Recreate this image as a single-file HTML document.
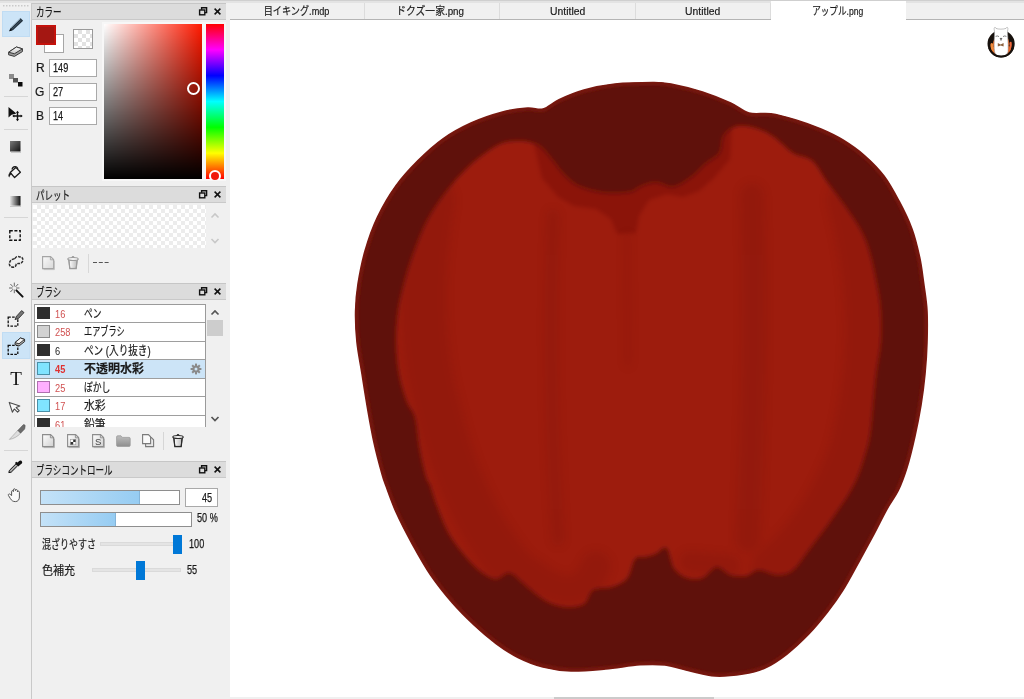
<!DOCTYPE html>
<html lang="ja">
<head>
<meta charset="utf-8">
<title>アップル.png</title>
<style>
*{box-sizing:border-box;margin:0;padding:0}
html,body{width:1024px;height:699px;overflow:hidden;background:#f0f0f0}
body{position:relative;opacity:.999;font-family:"Liberation Sans","Noto Sans CJK JP",sans-serif;font-size:12px;color:#1a1a1a}
.abs{position:absolute}
#topstrip{left:0;top:0;width:1024px;height:3px;background:#e3e3e3;border-top:1px solid #cfcfcf}
/* toolbar */
#toolbar{left:0;top:3px;width:32px;height:696px;background:#f0f0f0;border-right:1px solid #c9c9c9}
.tsel{background:#cce4f7;border:1px solid #b8d8f0}
.tsep{left:4px;width:23px;height:1px;background:#d4d4d4}
/* panels */
.ptitle{left:32px;width:194px;height:17px;background:#dcdcdc;border-top:1px solid #c6c6c6;border-bottom:1px solid #c9c9c9}
.ptitle span{-webkit-text-stroke:.2px #1a1a1a;position:absolute;left:4px;top:.7px;font-size:12px;line-height:17px;white-space:nowrap;transform-origin:0 50%;transform:scaleX(.71)}
.ptitle svg{position:absolute;top:0;left:165px}
.inp{background:#fff;border:1px solid #a9a9a9}
.lbl{-webkit-text-stroke:.2px #1a1a1a;font-size:12px;line-height:14px;white-space:nowrap}
.num{-webkit-text-stroke:.25px #1a1a1a;font-size:12px;line-height:14px;white-space:nowrap;transform-origin:0 50%;transform:scaleX(.76)}
/* brush list */
#blist{left:34px;top:303.5px;width:172px;height:123px;background:#fff;border-left:1px solid #9a9a9a;border-right:1px solid #9a9a9a;border-top:1px solid #9a9a9a;overflow:hidden}
.brow{position:absolute;left:0;width:170px;height:18.5px;border-bottom:1px solid #9e9e9e}
.brow i{position:absolute;left:2px;top:2px;width:12.5px;height:12.5px;border:1px solid #777}
.brow b{position:absolute;left:20px;top:2px;font-weight:normal;font-size:11px;line-height:14px;color:#d05050;transform-origin:0 50%;transform:scaleX(.84)}
.brow span{-webkit-text-stroke:.2px #1a1a1a;position:absolute;left:49px;top:1px;font-size:12px;line-height:16px;white-space:nowrap;transform-origin:0 50%}
.brow.sel{background:#cce4f7}
.brow.sel b{font-weight:bold;color:#e03030}
.brow.sel span{font-weight:bold}
/* tabs */
#tabbar{left:230px;top:3px;width:794px;height:17px;background:#f0f0f0;border-bottom:1px solid #b4b4b4}
.tab{-webkit-text-stroke:.2px #1a1a1a;position:absolute;top:0;height:16px;border-right:1px solid #dcdcdc;text-align:center;font-size:11px;line-height:16px;white-space:nowrap}
.tab span{display:inline-block}
.tab.act{top:-2px;height:19px;background:#fff;border-right:none;line-height:20px}
#canvas{left:230px;top:20px;width:794px;height:677px;background:#fff;overflow:hidden}
</style>
</head>
<body>
<div id="topstrip" class="abs"></div>
<div id="canvas" class="abs">
<svg class="abs" style="left:-230px;top:-20px" width="1024" height="699" viewBox="0 0 1024 699">
<defs>
<filter id="bl" x="-5%" y="-5%" width="110%" height="110%"><feGaussianBlur stdDeviation="2.2"/></filter>
<filter id="bl1" x="-5%" y="-5%" width="110%" height="110%"><feGaussianBlur stdDeviation="1.3"/></filter>
<filter id="bl2" x="-10%" y="-10%" width="120%" height="120%"><feGaussianBlur stdDeviation="5"/></filter>
<clipPath id="ic"><path d="M640.0 187.0C644.2 185.4 649.9 182.5 655.6 182.5C661.3 182.5 667.8 188.1 674.0 187.0C680.2 185.9 687.7 179.8 693.0 176.0C698.3 172.2 701.1 167.8 705.6 164.0C710.1 160.2 716.6 157.7 719.7 153.0C722.8 148.3 721.1 140.1 724.0 135.6C726.9 131.1 731.7 127.3 737.0 126.0C742.3 124.7 749.4 126.2 755.6 128.0C761.8 129.8 767.8 132.8 774.0 137.0C780.2 141.2 786.7 149.1 793.0 153.0C799.3 156.9 806.2 155.7 812.0 160.6C817.8 165.5 821.8 174.7 827.5 182.5C833.2 190.3 840.2 199.2 846.0 207.5C851.8 215.8 857.8 224.2 862.0 232.5C866.2 240.8 868.4 248.2 871.0 257.5C873.6 266.8 875.9 279.1 877.5 288.0C879.1 296.9 880.1 301.9 880.6 311.0C881.1 320.1 881.4 332.0 880.6 342.5C879.8 353.0 877.3 363.6 876.0 374.0C874.7 384.4 874.0 394.7 873.0 405.0C872.0 415.3 871.2 427.2 869.7 436.0C868.2 444.8 866.1 451.0 864.0 458.0C861.9 465.0 859.7 471.8 857.0 478.0C854.3 484.2 851.2 489.7 848.0 495.0C844.8 500.3 841.4 505.0 838.0 510.0C834.6 515.0 832.4 518.3 827.5 525.0C822.6 531.7 814.5 542.5 808.8 550.0C803.0 557.5 798.2 565.8 793.0 570.0C787.8 574.2 783.2 575.0 777.5 575.0C771.8 575.0 764.0 569.8 758.8 570.0C753.5 570.2 750.7 575.2 746.0 576.0C741.3 576.8 735.5 576.5 730.6 575.0C725.7 573.5 721.2 566.5 716.5 567.0C711.8 567.5 707.4 576.2 702.5 578.0C697.6 579.8 691.8 579.6 687.0 578.0C682.2 576.4 677.4 573.5 674.0 568.5C670.6 563.5 669.6 550.4 666.5 548.0C663.4 545.6 659.2 552.5 655.6 554.0C652.0 555.5 648.4 556.2 645.0 557.0C641.6 557.8 637.9 555.5 635.0 559.0C632.1 562.5 631.3 573.3 627.5 578.0C623.7 582.7 617.8 585.0 612.0 587.0C606.2 589.0 597.7 587.2 593.0 590.0C588.3 592.8 588.7 601.2 584.0 604.0C579.3 606.8 571.3 607.5 565.0 607.0C558.7 606.5 552.2 604.3 546.0 601.0C539.8 597.7 533.5 591.7 527.5 587.0C521.5 582.3 515.2 574.3 510.0 573.0C504.8 571.7 500.9 579.2 496.0 579.0C491.1 578.8 485.8 575.4 480.6 571.6C475.4 567.8 470.3 562.3 465.0 556.0C459.7 549.7 453.7 542.3 449.0 534.0C444.3 525.7 440.2 514.2 437.0 506.0C433.8 497.8 431.8 489.8 430.0 485.0C428.2 480.2 427.7 483.0 426.0 477.0C424.3 471.0 421.5 458.9 419.7 449.0C417.9 439.1 417.1 425.3 415.0 417.5C412.9 409.7 409.7 409.2 407.0 402.0C404.3 394.8 400.8 383.9 399.0 374.0C397.2 364.1 396.2 353.0 396.0 342.5C395.8 332.0 396.7 320.8 398.0 311.0C399.3 301.2 401.7 292.9 404.0 284.0C406.3 275.1 408.1 268.2 412.0 257.5C415.9 246.8 421.8 230.9 427.5 220.0C433.2 209.1 439.8 200.3 446.0 192.0C452.2 183.7 458.7 176.3 465.0 170.0C471.3 163.7 477.8 158.5 484.0 154.0C490.2 149.5 495.8 145.2 502.5 143.0C509.2 140.8 517.8 140.4 524.0 141.0C530.2 141.6 535.2 143.2 540.0 146.5C544.8 149.8 548.3 155.7 552.5 160.6C556.7 165.5 560.3 171.6 565.0 176.0C569.7 180.4 573.8 184.2 580.6 187.0C587.4 189.8 597.3 192.2 605.6 193.0C613.9 193.8 624.9 193.0 630.6 192.0C636.3 191.0 635.8 188.6 640.0 187.0Z"/></clipPath>
<clipPath id="oc"><path d="M652.5 82.5C661.8 82.5 662.7 82.4 671.0 84.0C679.3 85.6 692.6 88.8 702.5 92.0C712.4 95.2 722.9 99.5 730.6 103.0C738.4 106.5 742.3 111.2 749.0 113.0C755.7 114.8 763.2 112.6 771.0 113.8C778.8 114.9 787.7 117.5 796.0 120.0C804.3 122.5 813.2 125.7 821.0 129.0C828.8 132.3 835.7 135.5 843.0 140.0C850.3 144.5 858.2 150.0 865.0 156.0C871.8 162.0 878.3 168.5 884.0 176.0C889.7 183.5 894.3 192.2 899.0 201.0C903.7 209.8 908.5 219.6 912.0 229.0C915.5 238.4 917.7 248.3 919.7 257.5C921.7 266.7 922.5 275.1 923.8 284.0C925.0 292.9 926.5 301.2 927.0 311.0C927.5 320.8 927.3 332.0 927.0 342.5C926.7 353.0 926.0 363.6 925.0 374.0C924.0 384.4 922.7 394.7 921.0 405.0C919.3 415.3 917.3 425.6 915.0 436.0C912.7 446.4 909.8 458.5 907.0 467.5C904.2 476.5 901.8 483.1 898.5 490.0C895.2 496.9 891.1 501.7 887.0 509.0C882.9 516.3 878.7 525.2 874.0 534.0C869.3 542.8 863.9 552.7 858.8 562.0C853.6 571.3 848.2 581.7 843.0 590.0C837.8 598.3 833.2 604.7 827.5 612.0C821.8 619.3 815.5 627.0 808.8 634.0C802.0 641.0 794.3 648.3 787.0 654.0C779.7 659.7 772.3 664.7 765.0 668.0C757.7 671.3 751.3 672.7 743.0 674.0C734.7 675.3 723.8 676.5 715.0 676.0C706.2 675.5 698.3 672.8 690.0 671.0C681.7 669.2 673.3 666.0 665.0 665.0C656.7 664.0 649.9 664.1 640.0 664.8C630.1 665.4 617.1 668.0 605.6 669.0C594.1 670.0 581.4 671.3 571.0 671.0C560.6 670.7 551.8 669.2 543.0 667.0C534.2 664.8 525.8 661.4 518.0 657.5C510.2 653.6 503.3 648.9 496.0 643.5C488.7 638.1 481.2 631.8 474.0 625.0C466.8 618.2 459.7 611.3 452.5 603.0C445.3 594.7 437.4 584.9 430.6 575.0C423.9 565.1 417.8 554.0 412.0 543.5C406.2 533.0 400.3 521.6 396.0 512.0C391.7 502.4 388.3 492.3 386.0 486.0C383.7 479.7 384.0 481.2 382.0 474.0C380.0 466.8 376.3 453.0 374.0 442.5C371.7 432.0 370.0 422.4 368.0 411.0C366.0 399.6 363.8 385.4 362.0 374.0C360.2 362.6 358.1 353.0 357.0 342.5C355.9 332.0 355.4 320.8 355.6 311.0C355.8 301.2 356.4 294.0 358.0 284.0C359.6 274.0 361.8 262.2 365.0 251.0C368.2 239.8 372.3 227.9 377.5 217.0C382.7 206.1 389.2 195.0 396.0 185.6C402.8 176.2 410.2 168.4 418.0 160.6C425.8 152.8 434.2 145.0 443.0 138.8C451.8 132.5 461.1 127.5 471.0 123.0C480.9 118.5 493.1 114.5 502.5 112.0C511.9 109.5 520.8 108.5 527.5 108.0C534.2 107.5 537.8 110.4 543.0 109.0C548.2 107.6 552.2 102.9 559.0 99.7C565.8 96.5 574.7 92.6 584.0 90.0C593.3 87.4 603.6 85.2 615.0 84.0C626.4 82.8 643.2 82.5 652.5 82.5Z"/></clipPath>
</defs>
<path id="apple-outer" d="M652.5 82.5C661.8 82.5 662.7 82.4 671.0 84.0C679.3 85.6 692.6 88.8 702.5 92.0C712.4 95.2 722.9 99.5 730.6 103.0C738.4 106.5 742.3 111.2 749.0 113.0C755.7 114.8 763.2 112.6 771.0 113.8C778.8 114.9 787.7 117.5 796.0 120.0C804.3 122.5 813.2 125.7 821.0 129.0C828.8 132.3 835.7 135.5 843.0 140.0C850.3 144.5 858.2 150.0 865.0 156.0C871.8 162.0 878.3 168.5 884.0 176.0C889.7 183.5 894.3 192.2 899.0 201.0C903.7 209.8 908.5 219.6 912.0 229.0C915.5 238.4 917.7 248.3 919.7 257.5C921.7 266.7 922.5 275.1 923.8 284.0C925.0 292.9 926.5 301.2 927.0 311.0C927.5 320.8 927.3 332.0 927.0 342.5C926.7 353.0 926.0 363.6 925.0 374.0C924.0 384.4 922.7 394.7 921.0 405.0C919.3 415.3 917.3 425.6 915.0 436.0C912.7 446.4 909.8 458.5 907.0 467.5C904.2 476.5 901.8 483.1 898.5 490.0C895.2 496.9 891.1 501.7 887.0 509.0C882.9 516.3 878.7 525.2 874.0 534.0C869.3 542.8 863.9 552.7 858.8 562.0C853.6 571.3 848.2 581.7 843.0 590.0C837.8 598.3 833.2 604.7 827.5 612.0C821.8 619.3 815.5 627.0 808.8 634.0C802.0 641.0 794.3 648.3 787.0 654.0C779.7 659.7 772.3 664.7 765.0 668.0C757.7 671.3 751.3 672.7 743.0 674.0C734.7 675.3 723.8 676.5 715.0 676.0C706.2 675.5 698.3 672.8 690.0 671.0C681.7 669.2 673.3 666.0 665.0 665.0C656.7 664.0 649.9 664.1 640.0 664.8C630.1 665.4 617.1 668.0 605.6 669.0C594.1 670.0 581.4 671.3 571.0 671.0C560.6 670.7 551.8 669.2 543.0 667.0C534.2 664.8 525.8 661.4 518.0 657.5C510.2 653.6 503.3 648.9 496.0 643.5C488.7 638.1 481.2 631.8 474.0 625.0C466.8 618.2 459.7 611.3 452.5 603.0C445.3 594.7 437.4 584.9 430.6 575.0C423.9 565.1 417.8 554.0 412.0 543.5C406.2 533.0 400.3 521.6 396.0 512.0C391.7 502.4 388.3 492.3 386.0 486.0C383.7 479.7 384.0 481.2 382.0 474.0C380.0 466.8 376.3 453.0 374.0 442.5C371.7 432.0 370.0 422.4 368.0 411.0C366.0 399.6 363.8 385.4 362.0 374.0C360.2 362.6 358.1 353.0 357.0 342.5C355.9 332.0 355.4 320.8 355.6 311.0C355.8 301.2 356.4 294.0 358.0 284.0C359.6 274.0 361.8 262.2 365.0 251.0C368.2 239.8 372.3 227.9 377.5 217.0C382.7 206.1 389.2 195.0 396.0 185.6C402.8 176.2 410.2 168.4 418.0 160.6C425.8 152.8 434.2 145.0 443.0 138.8C451.8 132.5 461.1 127.5 471.0 123.0C480.9 118.5 493.1 114.5 502.5 112.0C511.9 109.5 520.8 108.5 527.5 108.0C534.2 107.5 537.8 110.4 543.0 109.0C548.2 107.6 552.2 102.9 559.0 99.7C565.8 96.5 574.7 92.6 584.0 90.0C593.3 87.4 603.6 85.2 615.0 84.0C626.4 82.8 643.2 82.5 652.5 82.5Z" fill="#5f110b" stroke="#7a1a12" stroke-width="1.6"/>
<g clip-path="url(#oc)"><path d="M652.5 82.5C661.8 82.5 662.7 82.4 671.0 84.0C679.3 85.6 692.6 88.8 702.5 92.0C712.4 95.2 722.9 99.5 730.6 103.0C738.4 106.5 742.3 111.2 749.0 113.0C755.7 114.8 763.2 112.6 771.0 113.8C778.8 114.9 787.7 117.5 796.0 120.0C804.3 122.5 813.2 125.7 821.0 129.0C828.8 132.3 835.7 135.5 843.0 140.0C850.3 144.5 858.2 150.0 865.0 156.0C871.8 162.0 878.3 168.5 884.0 176.0C889.7 183.5 894.3 192.2 899.0 201.0C903.7 209.8 908.5 219.6 912.0 229.0C915.5 238.4 917.7 248.3 919.7 257.5C921.7 266.7 922.5 275.1 923.8 284.0C925.0 292.9 926.5 301.2 927.0 311.0C927.5 320.8 927.3 332.0 927.0 342.5C926.7 353.0 926.0 363.6 925.0 374.0C924.0 384.4 922.7 394.7 921.0 405.0C919.3 415.3 917.3 425.6 915.0 436.0C912.7 446.4 909.8 458.5 907.0 467.5C904.2 476.5 901.8 483.1 898.5 490.0C895.2 496.9 891.1 501.7 887.0 509.0C882.9 516.3 878.7 525.2 874.0 534.0C869.3 542.8 863.9 552.7 858.8 562.0C853.6 571.3 848.2 581.7 843.0 590.0C837.8 598.3 833.2 604.7 827.5 612.0C821.8 619.3 815.5 627.0 808.8 634.0C802.0 641.0 794.3 648.3 787.0 654.0C779.7 659.7 772.3 664.7 765.0 668.0C757.7 671.3 751.3 672.7 743.0 674.0C734.7 675.3 723.8 676.5 715.0 676.0C706.2 675.5 698.3 672.8 690.0 671.0C681.7 669.2 673.3 666.0 665.0 665.0C656.7 664.0 649.9 664.1 640.0 664.8C630.1 665.4 617.1 668.0 605.6 669.0C594.1 670.0 581.4 671.3 571.0 671.0C560.6 670.7 551.8 669.2 543.0 667.0C534.2 664.8 525.8 661.4 518.0 657.5C510.2 653.6 503.3 648.9 496.0 643.5C488.7 638.1 481.2 631.8 474.0 625.0C466.8 618.2 459.7 611.3 452.5 603.0C445.3 594.7 437.4 584.9 430.6 575.0C423.9 565.1 417.8 554.0 412.0 543.5C406.2 533.0 400.3 521.6 396.0 512.0C391.7 502.4 388.3 492.3 386.0 486.0C383.7 479.7 384.0 481.2 382.0 474.0C380.0 466.8 376.3 453.0 374.0 442.5C371.7 432.0 370.0 422.4 368.0 411.0C366.0 399.6 363.8 385.4 362.0 374.0C360.2 362.6 358.1 353.0 357.0 342.5C355.9 332.0 355.4 320.8 355.6 311.0C355.8 301.2 356.4 294.0 358.0 284.0C359.6 274.0 361.8 262.2 365.0 251.0C368.2 239.8 372.3 227.9 377.5 217.0C382.7 206.1 389.2 195.0 396.0 185.6C402.8 176.2 410.2 168.4 418.0 160.6C425.8 152.8 434.2 145.0 443.0 138.8C451.8 132.5 461.1 127.5 471.0 123.0C480.9 118.5 493.1 114.5 502.5 112.0C511.9 109.5 520.8 108.5 527.5 108.0C534.2 107.5 537.8 110.4 543.0 109.0C548.2 107.6 552.2 102.9 559.0 99.7C565.8 96.5 574.7 92.6 584.0 90.0C593.3 87.4 603.6 85.2 615.0 84.0C626.4 82.8 643.2 82.5 652.5 82.5Z" fill="none" stroke="#741810" stroke-width="6" filter="url(#bl1)"/><path id="apple-inner" d="M640.0 187.0C644.2 185.4 649.9 182.5 655.6 182.5C661.3 182.5 667.8 188.1 674.0 187.0C680.2 185.9 687.7 179.8 693.0 176.0C698.3 172.2 701.1 167.8 705.6 164.0C710.1 160.2 716.6 157.7 719.7 153.0C722.8 148.3 721.1 140.1 724.0 135.6C726.9 131.1 731.7 127.3 737.0 126.0C742.3 124.7 749.4 126.2 755.6 128.0C761.8 129.8 767.8 132.8 774.0 137.0C780.2 141.2 786.7 149.1 793.0 153.0C799.3 156.9 806.2 155.7 812.0 160.6C817.8 165.5 821.8 174.7 827.5 182.5C833.2 190.3 840.2 199.2 846.0 207.5C851.8 215.8 857.8 224.2 862.0 232.5C866.2 240.8 868.4 248.2 871.0 257.5C873.6 266.8 875.9 279.1 877.5 288.0C879.1 296.9 880.1 301.9 880.6 311.0C881.1 320.1 881.4 332.0 880.6 342.5C879.8 353.0 877.3 363.6 876.0 374.0C874.7 384.4 874.0 394.7 873.0 405.0C872.0 415.3 871.2 427.2 869.7 436.0C868.2 444.8 866.1 451.0 864.0 458.0C861.9 465.0 859.7 471.8 857.0 478.0C854.3 484.2 851.2 489.7 848.0 495.0C844.8 500.3 841.4 505.0 838.0 510.0C834.6 515.0 832.4 518.3 827.5 525.0C822.6 531.7 814.5 542.5 808.8 550.0C803.0 557.5 798.2 565.8 793.0 570.0C787.8 574.2 783.2 575.0 777.5 575.0C771.8 575.0 764.0 569.8 758.8 570.0C753.5 570.2 750.7 575.2 746.0 576.0C741.3 576.8 735.5 576.5 730.6 575.0C725.7 573.5 721.2 566.5 716.5 567.0C711.8 567.5 707.4 576.2 702.5 578.0C697.6 579.8 691.8 579.6 687.0 578.0C682.2 576.4 677.4 573.5 674.0 568.5C670.6 563.5 669.6 550.4 666.5 548.0C663.4 545.6 659.2 552.5 655.6 554.0C652.0 555.5 648.4 556.2 645.0 557.0C641.6 557.8 637.9 555.5 635.0 559.0C632.1 562.5 631.3 573.3 627.5 578.0C623.7 582.7 617.8 585.0 612.0 587.0C606.2 589.0 597.7 587.2 593.0 590.0C588.3 592.8 588.7 601.2 584.0 604.0C579.3 606.8 571.3 607.5 565.0 607.0C558.7 606.5 552.2 604.3 546.0 601.0C539.8 597.7 533.5 591.7 527.5 587.0C521.5 582.3 515.2 574.3 510.0 573.0C504.8 571.7 500.9 579.2 496.0 579.0C491.1 578.8 485.8 575.4 480.6 571.6C475.4 567.8 470.3 562.3 465.0 556.0C459.7 549.7 453.7 542.3 449.0 534.0C444.3 525.7 440.2 514.2 437.0 506.0C433.8 497.8 431.8 489.8 430.0 485.0C428.2 480.2 427.7 483.0 426.0 477.0C424.3 471.0 421.5 458.9 419.7 449.0C417.9 439.1 417.1 425.3 415.0 417.5C412.9 409.7 409.7 409.2 407.0 402.0C404.3 394.8 400.8 383.9 399.0 374.0C397.2 364.1 396.2 353.0 396.0 342.5C395.8 332.0 396.7 320.8 398.0 311.0C399.3 301.2 401.7 292.9 404.0 284.0C406.3 275.1 408.1 268.2 412.0 257.5C415.9 246.8 421.8 230.9 427.5 220.0C433.2 209.1 439.8 200.3 446.0 192.0C452.2 183.7 458.7 176.3 465.0 170.0C471.3 163.7 477.8 158.5 484.0 154.0C490.2 149.5 495.8 145.2 502.5 143.0C509.2 140.8 517.8 140.4 524.0 141.0C530.2 141.6 535.2 143.2 540.0 146.5C544.8 149.8 548.3 155.7 552.5 160.6C556.7 165.5 560.3 171.6 565.0 176.0C569.7 180.4 573.8 184.2 580.6 187.0C587.4 189.8 597.3 192.2 605.6 193.0C613.9 193.8 624.9 193.0 630.6 192.0C636.3 191.0 635.8 188.6 640.0 187.0Z" fill="#9d1c10" filter="url(#bl)"/>
<g clip-path="url(#ic)">
<path d="M533 140 L542 178 L558 197 L574 206 L596 209 L611 219 L617 234 L636 233 L639 216 L649 200 L667 194 L683 197 L699 191 L714 178 L730 159 L732 120 L600 120Z" fill="#5f110b" fill-opacity=".3" filter="url(#bl)"/>
<g filter="url(#bl2)" fill="none" stroke="#5f110b" stroke-linecap="round" stroke-linejoin="round" opacity=".14">
<path d="M432 200 C420 270 418 340 438 410 C452 470 476 530 520 578" stroke-width="46"/>
<path d="M530 572 C560 596 585 598 596 566" stroke-width="30"/>
<path d="M553 215 C549 330 552 450 558 540" stroke-width="12"/>
<path d="M627 235 L628 365" stroke-width="5"/>
<path d="M752 195 C756 320 752 440 748 540" stroke-width="24"/>
<path d="M848 200 C872 290 870 370 850 450 C832 500 806 540 772 568" stroke-width="42"/>
<path d="M690 562 L730 566" stroke-width="22"/>
</g></g></g>
</svg>
<svg class="abs" style="left:754px;top:4px" width="36" height="36" viewBox="984 24 36 36">
<defs><clipPath id="mc"><circle cx="1001.1" cy="43.8" r="12.4"/></clipPath></defs>
<circle cx="1001.1" cy="43.8" r="12.4" fill="#e2601c"/>
<g clip-path="url(#mc)">
<path d="M988 40 C990 36 992 33 995 31 L996 38 C993 40 992 44 994 47 C991 46 990 50 993 53 C995 55 996 56 997 58 L986 58Z" fill="#16100c"/>
<path d="M1014 40 C1012 36 1010 33 1007 31 L1006.5 37 C1009 39 1010 43 1008.5 46 C1011 46 1012 50 1009.5 53 C1008 55 1006 56 1005 58 L1016 58Z" fill="#16100c"/>
<path d="M990.5 44 C991.5 42 993 43 993.5 45 C994 48 993 50 994.5 52 C992 51.5 990 48 990.5 44Z" fill="#f08a3c"/>
<path d="M1011.5 42 C1010 41 1009 43 1009.5 45 C1010 47 1010 49 1008.5 51 C1011 50 1012.5 46 1011.5 42Z" fill="#f0683c"/>
</g>
<circle cx="1001.1" cy="43.8" r="12.6" fill="none" stroke="#17110d" stroke-width="2"/>
<path d="M994.2 29.4 C993.8 27.2 995.4 26.6 996 28.4 C998 29.4 1003.6 29.4 1006 28.4 C1006.6 26.6 1008.4 27.2 1007.8 29.6 C1007.4 31.4 1007.6 34 1007.8 37 C1008 42 1008.4 48 1008 52 C1007 55 1004 56.4 1001 56.4 C998 56.4 995.4 55 994.6 52 C993.8 47 994.2 42 994.4 37 C994.6 34 994.6 31.4 994.2 29.4Z" fill="#fff" stroke="#9a9a9a" stroke-width=".6"/>
<path d="M989.2 48 A12.6 12.6 0 0 0 1013 48" fill="none" stroke="#17110d" stroke-width="2"/>
<path d="M995.6 36.4 Q997.4 35.4 999 36.6 M1003 36.6 Q1004.6 35.4 1006.4 36.4" fill="none" stroke="#666" stroke-width=".8"/>
<path d="M1000 38.4 H1002 L1001 39.8Z M1001 39.8 V41" fill="#333" stroke="#333" stroke-width=".5"/>
<path d="M997.8 43 L1000.6 44.4 L1003.6 43 V46.6 L1000.6 45.4 L997.8 46.6Z" fill="#8a6240"/>
</svg>
</div>
<div id="tabbar" class="abs">
<div class="tab" style="left:0;width:135px"><span style="transform:scaleX(.83)">目イキング.mdp</span></div>
<div class="tab" style="left:135px;width:135px"><span style="transform:scaleX(.89);margin-left:-3px">ドクズ一家.png</span></div>
<div class="tab" style="left:270px;width:136px"><span style="transform:scaleX(.94)">Untitled</span></div>
<div class="tab" style="left:406px;width:135px"><span style="transform:scaleX(.94)">Untitled</span></div>
<div class="tab act" style="left:541px;width:135px"><span style="transform:scaleX(.78);margin-left:-2px">アップル.png</span></div>
</div>
<div class="abs" style="left:554px;top:697px;width:160px;height:2px;background:#cbcbcb"></div>
<div id="toolbar" class="abs">
<svg class="abs" style="left:0;top:-3px" width="32" height="520" viewBox="0 0 32 520">
<defs>
<linearGradient id="gdk" x1="0" y1="0" x2="1" y2="1"><stop offset="0" stop-color="#7a7a7a"/><stop offset="1" stop-color="#111"/></linearGradient>
<linearGradient id="ggr" x1="0" y1="0" x2="1" y2="0"><stop offset="0" stop-color="#fafafa"/><stop offset="1" stop-color="#111"/></linearGradient>
<linearGradient id="gpen" x1="0" y1="0" x2="1" y2="1"><stop offset="0" stop-color="#4a6070"/><stop offset="1" stop-color="#1c2830"/></linearGradient>
</defs>
<!-- grip dots -->
<g fill="#c9c9c9"><rect x="3" y="5" width="1.5" height="1.5"/><rect x="6" y="5" width="1.5" height="1.5"/><rect x="9" y="5" width="1.5" height="1.5"/><rect x="12" y="5" width="1.5" height="1.5"/><rect x="15" y="5" width="1.5" height="1.5"/><rect x="18" y="5" width="1.5" height="1.5"/><rect x="21" y="5" width="1.5" height="1.5"/><rect x="24" y="5" width="1.5" height="1.5"/><rect x="27" y="5" width="1.5" height="1.5"/></g>
<!-- selected boxes -->
<rect x="2.5" y="11.5" width="27" height="25" fill="#cce4f7" stroke="#c0dcf3"/>
<rect x="2.5" y="332.5" width="27.5" height="26" fill="#cce4f7" stroke="#c0dcf3"/>
<!-- pen -->
<g><path d="M9.3 31.3 L10.5 27.9 L20.5 18.1 L23.1 20.7 L12.9 30.3 Z" fill="#22303c"/><path d="M10.9 27.9 L20.5 18.6" stroke="#8ea6b8" stroke-width="1" fill="none"/><path d="M12.2 29 L21.6 19.8" stroke="#4c6272" stroke-width=".8" fill="none"/><path d="M9.3 31.3 L10.2 28.8 L11.9 30.4 Z" fill="#0c1218"/></g>
<!-- eraser -->
<defs><linearGradient id="ers" x1="0" y1="0" x2="0" y2="1"><stop offset="0" stop-color="#fff"/><stop offset="1" stop-color="#c4c4c4"/></linearGradient></defs>
<g stroke="#3a3a3a" stroke-width="1" stroke-linejoin="round"><path d="M8.6 52.2 L16.4 47 L22.4 48.8 L22.4 51.6 L14.4 56.4 L8.6 54.8 Z" fill="#9c9c9c"/><path d="M8.6 52.2 L16.4 47 L22.4 48.8 L14.4 53.8 Z" fill="url(#ers)"/></g>
<!-- dots -->
<rect x="9" y="74" width="5" height="5" fill="#8c8c8c"/><rect x="13" y="78" width="5" height="4.5" fill="#555"/><rect x="18" y="82" width="4.5" height="4.5" fill="#0a0a0a"/>
<!-- seps -->
<g fill="#d6d6d6"><rect x="4" y="96" width="24" height="1"/><rect x="4" y="129" width="24" height="1"/><rect x="4" y="217" width="24" height="1"/><rect x="4" y="450" width="24" height="1"/></g>
<!-- move -->
<path d="M8.5 107 L8.5 117.5 L11.6 114.8 L16.4 113.4 Z" fill="#111"/><path d="M17.5 112 V120 M13.5 116 H21.5" stroke="#111" stroke-width="1.4" fill="none"/><path d="M17.5 110.8 l-1.6 2 h3.2z M17.5 121.2 l-1.6 -2 h3.2z M12.3 116 l2 -1.6 v3.2z M22.7 116 l-2 -1.6 v3.2z" fill="#111"/>
<!-- fill rect -->
<rect x="10" y="141" width="10.5" height="10.5" fill="url(#gdk)"/><rect x="11" y="152" width="10" height="1" fill="#c8c8c8"/>
<!-- bucket -->
<g><path d="M10.2 172.5 L15.8 167.4 L20.4 172.2 L14.6 177.6 Z" fill="#f4f4f4" stroke="#1a1a1a" stroke-width="1.3" stroke-linejoin="round"/><path d="M12 169.5 C12.5 166 17.5 165.5 17.8 169" fill="none" stroke="#1a1a1a" stroke-width="1.2"/><path d="M10.4 172.4 C8 173.6 8 176 9.2 177.4 C10 175.6 10.6 174.6 11.6 173.8Z" fill="#1a1a1a"/></g>
<!-- gradient -->
<rect x="9" y="196" width="11.5" height="9.6" fill="url(#ggr)"/><rect x="10" y="206" width="11" height="1" fill="#c8c8c8"/>
<!-- select rect -->
<rect x="9.8" y="230.8" width="10.4" height="9.4" fill="none" stroke="#111" stroke-width="1.4" stroke-dasharray="3 1.6"/>
<!-- lasso -->
<path d="M15 258.6 C15.6 256.4 18.4 256 19.6 257 C21.6 256.4 23.2 258.2 22.8 260.4 C22.6 262.6 20.6 263.8 18.6 263.4 L16.2 264.2 C16.2 266.4 14 267.6 12 267 C9.8 266.6 8.8 264.4 9.6 262.6 C9.8 260.6 12.6 258.8 15 258.6Z" fill="none" stroke="#2a2a2a" stroke-width="1.5" stroke-dasharray="2.8 1"/>
<!-- wand -->
<path d="M16.4 290.4 L22.6 296.6" stroke="#111" stroke-width="2" stroke-linecap="round"/><g stroke="#6a6a6a" stroke-width="1"><path d="M14.3 282.6 V286.4 M14.3 289.6 V293.2 M9 288 H12.6 M16 288 H19.4 M10.4 284 L13 286.8 M18.2 284 L15.6 286.8 M10.4 292 L13 289.2"/></g>
<!-- select pen -->
<rect x="8.2" y="317.2" width="9.6" height="9" fill="none" stroke="#111" stroke-width="1.3" stroke-dasharray="2.6 1.3"/><path d="M15 319.6 L16.4 316.4 L21.6 310.6 L24 312.6 L18.6 318.4 Z" fill="#777" stroke="#222" stroke-width="0.8"/>
<!-- select eraser -->
<rect x="8.2" y="345.4" width="9.6" height="9" fill="none" stroke="#111" stroke-width="1.3" stroke-dasharray="2.6 1.3"/><path d="M15 342.6 L20.4 338 L24.6 339.4 L24.6 341.6 L19 346 L15 344.6Z" fill="#b5b5b5" stroke="#222" stroke-width="0.9" stroke-linejoin="round"/><path d="M15 342.6 L20.4 338 L24.6 339.4 L19 343.8Z" fill="#f4f4f4" stroke="#222" stroke-width="0.9" stroke-linejoin="round"/>
<!-- arrow -->
<path d="M10.6 400.8 L10.6 411 L13.4 408.6 L15.6 412.6 L17.6 411.6 L15.6 407.8 L19.6 407.4 Z" fill="#fafafa" stroke="#4a4a4a" stroke-width="1.1" stroke-linejoin="round" transform="rotate(-18 15 406)"/>
<!-- knife -->
<path d="M9.4 439.4 L18.2 430 L20.8 433 C17.6 436.6 13.6 438.8 9.4 439.4Z" fill="#dedede" stroke="#9a9a9a" stroke-width=".6"/><path d="M17.8 430.4 L23.2 424.8 C24.4 424.2 25.5 425.2 25.1 426.6 L24.7 429 L20.6 433.2Z" fill="#6c6c6c" stroke="#4a4a4a" stroke-width=".5"/>
<!-- eyedropper -->
<g><path d="M8.8 472.6 L9.4 470.4 L16 463.8 L17.8 465.6 L11.2 472.2 Z" fill="#aaa" stroke="#111" stroke-width="1"/><path d="M15 463 L18.6 466.4 L19.6 465.2 L21.8 463.6 C22.8 462.4 22 460.4 20.4 460.4 C19.4 460.4 18.4 461.8 17.4 462.6 L16.2 461.8Z" fill="#111"/></g>
<!-- hand -->
<path d="M11.6 495.6 L11.6 491.6 C11.6 490.2 13.4 490.2 13.4 491.6 L13.4 489.8 C13.4 488.4 15.4 488.4 15.4 489.8 L15.4 490.6 C15.4 489.2 17.4 489.2 17.4 490.6 L17.4 492 C17.6 490.8 19.4 490.8 19.4 492.2 L19.4 497 C19.4 499.6 18 501.6 15.4 501.6 C13 501.6 11.6 500.6 10.4 498.6 L8.4 495.4 C7.8 494.2 9.4 493.4 10.2 494.4 Z" fill="#fafafa" stroke="#555" stroke-width="1" stroke-linejoin="round"/>
</svg>
<div class="abs" style="left:8px;top:366px;width:16px;height:20px;font-family:'Liberation Serif',serif;font-size:19px;line-height:20px;text-align:center;color:#111">T</div>
</div>
<div id="panels">
<svg width="0" height="0" style="position:absolute"><defs>
<g id="ticons"><path d="M4.6 5.8 V3.8 H9.6 V8.6 H7.8" fill="none" stroke="#111" stroke-width="1.4"/><rect x="2.6" y="6" width="5.2" height="4.8" fill="none" stroke="#111" stroke-width="1.4"/><path d="M17.6 4.6 L23.4 10.4 M23.4 4.6 L17.6 10.4" stroke="#111" stroke-width="1.5" fill="none"/></g>
<linearGradient id="docg" x1="0" y1="0" x2="1" y2="1"><stop offset="0" stop-color="#fff"/><stop offset="1" stop-color="#d0d0d0"/></linearGradient>
<linearGradient id="trg" x1="0" y1="0" x2="1" y2="0"><stop offset="0" stop-color="#fff"/><stop offset="1" stop-color="#bbb"/></linearGradient>
<g id="doc"><path d="M0.6 0.6 H8.6 L11.6 3.6 V12.6 H0.6 Z" fill="url(#docg)" stroke="#8c8c8c" stroke-width="1.1"/><path d="M8.4 0.8 V3.8 H11.4" fill="none" stroke="#8c8c8c" stroke-width="0.9"/><path d="M1.6 13.6 H12.4 V4.6" fill="none" stroke="#b0b0b0" stroke-width="1"/></g>
<g id="trash"><path d="M1.8 3.6 L2.8 12.4 H9.2 L10.2 3.6 Z" fill="url(#trg)"/><path d="M1.8 3.6 L2.8 12.6 H9.2 L10.2 3.6" fill="none" stroke-width="1.2"/><ellipse cx="6" cy="3" rx="5.2" ry="1.5" fill="#f4f4f4" stroke-width="1.2"/><path d="M4.6 1.4 C4.6 0.2 7.4 0.2 7.4 1.4" fill="none" stroke-width="1"/></g>
</defs></svg>

<!-- COLOR PANEL -->
<div class="abs ptitle" style="top:3px"><span>カラー</span><svg width="30" height="17"><use href="#ticons"/></svg></div>
<div class="abs" style="left:44px;top:34px;width:20px;height:19px;background:#fff;border:1px solid #a6a6a6"></div>
<div class="abs" style="left:36px;top:25px;width:20px;height:20px;background:#a41712;border:2px solid #c4120c"></div>
<div class="abs" style="left:73px;top:29px;width:20px;height:20px;border:1px solid #9a9a9a;background-color:#fff;background-image:linear-gradient(45deg,#e2e2e2 25%,transparent 25%,transparent 75%,#e2e2e2 75%),linear-gradient(45deg,#e2e2e2 25%,transparent 25%,transparent 75%,#e2e2e2 75%);background-size:8px 8px;background-position:0 0,4px 4px"></div>
<div class="abs lbl" style="left:36px;top:61px">R</div><div class="abs inp" style="left:49px;top:59px;width:48px;height:18px"></div><div class="abs num" style="left:53px;top:61px">149</div>
<div class="abs lbl" style="left:35px;top:85px">G</div><div class="abs inp" style="left:49px;top:83px;width:48px;height:18px"></div><div class="abs num" style="left:53px;top:85px">27</div>
<div class="abs lbl" style="left:36px;top:109px">B</div><div class="abs inp" style="left:49px;top:107px;width:48px;height:18px"></div><div class="abs num" style="left:53px;top:109px">14</div>
<div class="abs" style="left:102px;top:22px;width:124px;height:159px;background:#f7f7f7"></div>
<div class="abs" style="left:104px;top:23.5px;width:98px;height:155.5px;background:linear-gradient(to bottom,rgba(0,0,0,0),#000),linear-gradient(to right,#fff,#ff1900)"></div>
<div class="abs" style="left:206px;top:23.5px;width:18px;height:155.5px;background:linear-gradient(to bottom,#ff0000 0%,#ff00ff 16.67%,#0000ff 33.33%,#00ffff 50%,#00ff00 66.67%,#ffff00 83.33%,#ff0000 100%)"></div>
<div class="abs" style="left:186.5px;top:81.5px;width:13px;height:13px;border:2.8px solid #fff;border-radius:50%;box-shadow:0 0 1px rgba(0,0,0,.4)"></div>
<div class="abs" style="left:206px;top:169px;width:18px;height:11px;overflow:hidden"><div class="abs" style="left:3px;top:1px;width:12px;height:12px;border:2.8px solid #fff;border-radius:50%;background:#f01a0a"></div></div>

<!-- PALETTE PANEL -->
<div class="abs ptitle" style="top:186px"><span>パレット</span><svg width="30" height="17"><use href="#ticons"/></svg></div>
<div class="abs" style="left:33px;top:205px;width:173px;height:43px;background-color:#fff;background-image:linear-gradient(45deg,#ececec 25%,transparent 25%,transparent 75%,#ececec 75%),linear-gradient(45deg,#ececec 25%,transparent 25%,transparent 75%,#ececec 75%);background-size:8px 8px;background-position:0 0,4px 4px"></div>
<svg class="abs" style="left:207px;top:205px" width="17" height="44"><path d="M4.5 12.5 L8 9 L11.5 12.5 M4.5 34 L8 37.5 L11.5 34" fill="none" stroke="#c8c8c8" stroke-width="1.6"/></svg>
<svg class="abs" style="left:42px;top:256px" width="14" height="15" opacity=".75"><use href="#doc"/></svg>
<svg class="abs" style="left:67px;top:256px" width="13" height="14"><use href="#trash" stroke="#9a9a9a"/></svg>
<div class="abs" style="left:88px;top:254px;width:1px;height:19px;background:#d8d8d8"></div>
<div class="abs" style="left:93px;top:262px;width:4.4px;height:1.4px;background:#555;box-shadow:5.8px 0 0 #555,11.6px 0 0 #555"></div>

<!-- BRUSH PANEL -->
<div class="abs ptitle" style="top:283px"><span>ブラシ</span><svg width="30" height="17"><use href="#ticons"/></svg></div>
<div id="blist" class="abs">
<div class="brow" style="top:0"><i style="background:#2e2e2e;border-color:#2e2e2e"></i><b>16</b><span style="transform:scaleX(.72)">ペン</span></div>
<div class="brow" style="top:18.5px"><i style="background:#d2d2d2;border-color:#8a8a8a"></i><b>258</b><span style="transform:scaleX(.68)">エアブラシ</span></div>
<div class="brow" style="top:37px"><i style="background:#2e2e2e;border-color:#2e2e2e"></i><b style="color:#222">6</b><span style="transform:scaleX(.8)">ペン (入り抜き)</span></div>
<div class="brow sel" style="top:55.5px"><i style="background:#80e4ff;border-color:#4a90a8"></i><b>45</b><span style="transform:scaleX(1)">不透明水彩</span><svg style="position:absolute;left:155px;top:3px" width="12" height="12" viewBox="-6 -6 12 12"><g fill="#8a8a8a"><circle r="3.6"/><g id="gt"><rect x="-1" y="-5.4" width="2" height="10.8"/><rect x="-5.4" y="-1" width="10.8" height="2"/></g><use href="#gt" transform="rotate(45)"/></g><circle r="1.5" fill="#cce4f7"/></svg></div>
<div class="brow" style="top:74px"><i style="background:#ffb0ff;border-color:#b070b0"></i><b>25</b><span style="transform:scaleX(.73)">ぼかし</span></div>
<div class="brow" style="top:92.5px"><i style="background:#80e4ff;border-color:#4a90a8"></i><b>17</b><span style="transform:scaleX(.9)">水彩</span></div>
<div class="brow" style="top:111px"><i style="background:#2e2e2e;border-color:#2e2e2e"></i><b>61</b><span style="transform:scaleX(.9)">鉛筆</span></div>
</div>
<svg class="abs" style="left:207px;top:304px" width="17" height="124"><path d="M4.5 10.5 L8 7 L11.5 10.5 M4.5 113 L8 116.5 L11.5 113" fill="none" stroke="#555" stroke-width="1.7"/><rect x="0" y="16" width="16" height="16" fill="#cdcdcd"/></svg>
<svg class="abs" style="left:42px;top:434px" width="14" height="15"><use href="#doc"/></svg>
<svg class="abs" style="left:67px;top:434px" width="14" height="15"><use href="#doc"/><rect x="3.4" y="5.4" width="5.4" height="5.4" fill="#fff" stroke="#999" stroke-width=".6"/><rect x="3.6" y="8" width="2.6" height="2.6" fill="#333"/><rect x="6.2" y="5.6" width="2.4" height="2.4" fill="#333"/></svg>
<svg class="abs" style="left:92px;top:434px" width="14" height="15"><use href="#doc"/><text x="3" y="11.4" font-family="Liberation Sans, sans-serif" font-size="9.5" fill="#444">S</text></svg>
<svg class="abs" style="left:116px;top:435px" width="16" height="13"><defs><linearGradient id="fg" x1="0" y1="0" x2="0" y2="1"><stop offset="0" stop-color="#bdbdbd"/><stop offset="1" stop-color="#8e8e8e"/></linearGradient></defs><path d="M0.6 2 Q0.6 0.8 1.8 0.8 H5 L6.4 2.4 H13 Q14.2 2.4 14.2 3.6 V10.4 Q14.2 11.4 13 11.4 H1.8 Q0.6 11.4 0.6 10.4Z" fill="url(#fg)" stroke="#9a9a9a" stroke-width=".8"/></svg>
<svg class="abs" style="left:142px;top:434px" width="14" height="15"><path d="M3.6 3.6 H9.4 L11.6 5.8 V12.6 H3.6Z" fill="#e8e8e8" stroke="#7a7a7a" stroke-width="1.1"/><path d="M0.6 0.6 H6.4 L8.6 2.8 V9.6 H0.6Z" fill="#fafafa" stroke="#7a7a7a" stroke-width="1.1"/></svg>
<div class="abs" style="left:163px;top:432px;width:1px;height:18px;background:#d6d6d6"></div>
<svg class="abs" style="left:172px;top:434px" width="13" height="14"><use href="#trash" stroke="#2a2a2a"/></svg>

<!-- BRUSH CONTROL PANEL -->
<div class="abs ptitle" style="top:461px"><span>ブラシコントロール</span><svg width="30" height="17"><use href="#ticons"/></svg></div>
<div class="abs" style="left:40px;top:490px;width:140px;height:15px;background:#fff;border:1px solid #8e8e8e"><div style="width:99px;height:13px;background:linear-gradient(to right,#c4e2f8,#96ccf2);border-right:1px solid #84b4d8"></div></div>
<div class="abs inp" style="left:185px;top:488px;width:33px;height:19px"></div><div class="abs num" style="left:201.5px;top:491px">45</div>
<div class="abs" style="left:40px;top:512px;width:152px;height:15px;background:#fff;border:1px solid #8e8e8e"><div style="width:75px;height:13px;background:linear-gradient(to right,#c4e2f8,#96ccf2);border-right:1px solid #84b4d8"></div></div>
<div class="abs num" style="left:197px;top:511px">50 %</div>
<div class="abs lbl" style="left:42px;top:538px"><span class="sq" style="display:inline-block;transform-origin:0 50%;transform:scaleX(.75)">混ざりやすさ</span></div>
<div class="abs" style="left:100px;top:542px;width:80px;height:4px;background:#e4e4e4;border:1px solid #dadada"></div>
<div class="abs" style="left:173px;top:535px;width:9px;height:19px;background:#0078d7"></div>
<div class="abs num" style="left:189px;top:537px">100</div>
<div class="abs lbl" style="left:41.5px;top:564px"><span class="sq" style="display:inline-block;transform-origin:0 50%;transform:scaleX(.92)">色補充</span></div>
<div class="abs" style="left:92px;top:568px;width:89px;height:4px;background:#e4e4e4;border:1px solid #dadada"></div>
<div class="abs" style="left:136px;top:561px;width:9px;height:19px;background:#0078d7"></div>
<div class="abs num" style="left:187px;top:563px">55</div>
</div>
</body>
</html>
